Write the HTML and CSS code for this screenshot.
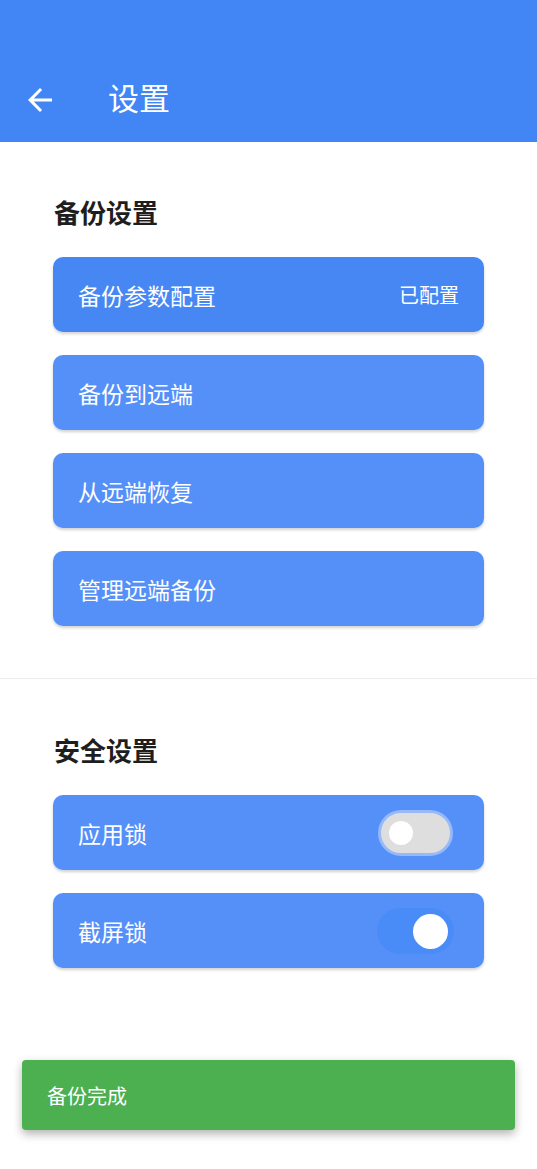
FILE: index.html
```html
<!DOCTYPE html>
<html lang="zh-CN">
<head>
    <meta charset="UTF-8">
    <meta name="viewport" content="width=device-width, initial-scale=1.0">
    <title>设置</title>
    <link rel="stylesheet" href="styles.css">
</head>
<body>
    <div class="topbar">
        <svg class="back" width="36" height="36" viewBox="0 0 24 24">
            <path d="M20 11H7.83l5.59-5.59L12 4l-8 8 8 8 1.41-1.41L7.83 13H20v-2z" fill="#fff"/>
        </svg>
        <span class="title">设置</span>
    </div>

    <div class="section">
        <h2>备份设置</h2>
        <div class="card first">
            <span>备份参数配置</span>
            <span class="status">已配置</span>
        </div>
        <div class="card"><span>备份到远端</span></div>
        <div class="card"><span>从远端恢复</span></div>
        <div class="card"><span>管理远端备份</span></div>
    </div>

    <div class="divider"></div>

    <div class="section security">
        <h2>安全设置</h2>
        <div class="card">
            <span>应用锁</span>
            <div class="switch off"><div class="knob"></div></div>
        </div>
        <div class="card">
            <span>截屏锁</span>
            <div class="switch on"><div class="knob"></div></div>
        </div>
    </div>

    <div class="toast">备份完成</div>
</body>
</html>
```

FILE: styles.css
```css
body {
    margin: 0;
    font-family: Roboto, "Noto Sans CJK SC", sans-serif;
    background-color: #fff;
    color: #222;
    height: 1169px;
    position: relative;
}
.topbar {
    height: 142px;
    background-color: #4286f5;
    display: flex;
    align-items: flex-end;
    padding: 0 0 20px 22px;
    box-sizing: border-box;
    color: #fff;
}
.back {
    margin-bottom: 4px;
}
.title {
    font-size: 31px;
    margin-left: 50px;
    line-height: 44px;
}
.section {
    padding: 55px 53px 29px;
}
.section h2 {
    font-size: 26px;
    font-weight: 700;
    margin: 0 0 26px 1px;
    line-height: 34px;
    color: #1e1e1e;
}
.card {
    height: 75px;
    background-color: #5590f8;
    border-radius: 10px;
    display: flex;
    align-items: center;
    justify-content: space-between;
    padding: 0 25px;
    margin-bottom: 23px;
    color: #fff;
    font-size: 23px;
    box-shadow: 0 2px 3px rgba(0, 0, 0, 0.18);
}
.card.first {
    background-color: #4787f4;
}
.status {
    font-size: 20px;
}
.divider {
    height: 1px;
    background-color: #ececec;
}
.security {
    padding-top: 56px;
}
.switch {
    width: 75px;
    height: 46px;
    border-radius: 23px;
    box-sizing: border-box;
    position: relative;
}
.switch.off {
    background-color: #dedede;
    border: 3px solid #95b9f9;
    margin-right: 6px;
}
.switch.on {
    width: 77px;
    background-color: #4a8cf7;
    margin-right: 5px;
}
.knob {
    position: absolute;
    background-color: #fff;
    border-radius: 50%;
}
.switch.off .knob {
    width: 24px;
    height: 24px;
    left: 8px;
    top: 8px;
}
.switch.on .knob {
    width: 35px;
    height: 35px;
    right: 6px;
    top: 6px;
}
.toast {
    position: absolute;
    left: 22px;
    right: 22px;
    top: 1060px;
    height: 70px;
    background-color: #4caf50;
    border-radius: 4px;
    color: #fff;
    font-size: 20px;
    display: flex;
    align-items: center;
    padding-left: 25px;
    box-shadow: 0 4px 10px rgba(0, 0, 0, 0.3);
}
```
